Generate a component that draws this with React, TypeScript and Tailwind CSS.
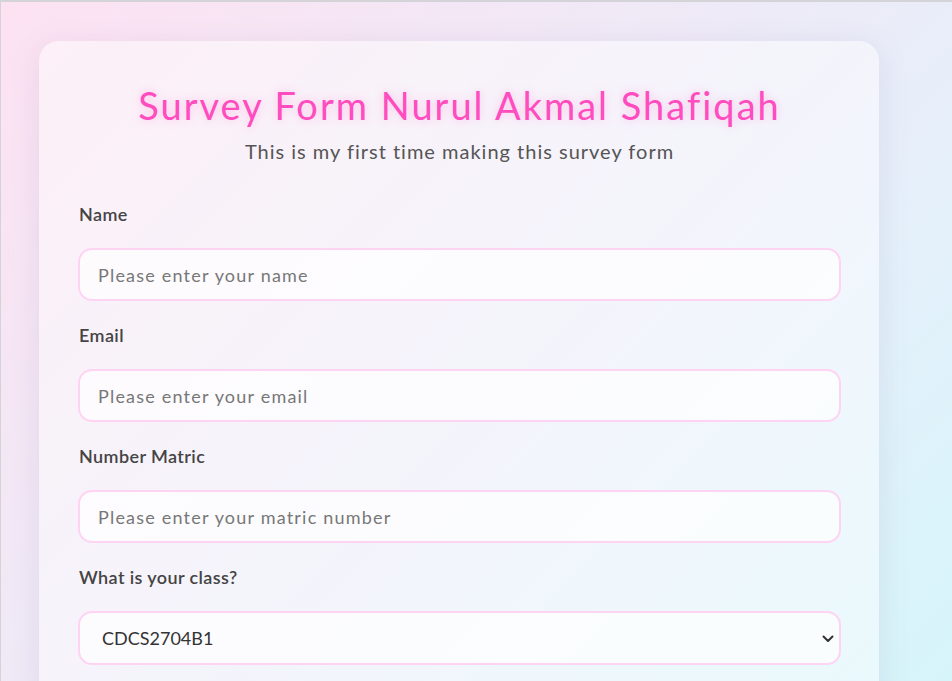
import React from 'react'

const fields = [
    { label: 'Name', placeholder: 'Please enter your name', type: 'text' },
    { label: 'Email', placeholder: 'Please enter your email', type: 'email' },
    { label: 'Number Matric', placeholder: 'Please enter your matric number', type: 'text' },
]

export default function App() {
    return (
        <div className="min-h-screen w-full overflow-hidden border-t-2 border-l border-[#d4d4d8] bg-[linear-gradient(135deg,#fde2f2_0%,#eeeaf7_45%,#e4f0fa_70%,#d5f5fa_100%)] pl-[38px] pt-[39px] font-['Lato',sans-serif]">
            <div className="w-[840px] rounded-[20px] bg-white/45 pl-[39px] pr-[38px] pt-[40px] pb-10 shadow-[0_6px_30px_rgba(120,110,160,0.14)]">
                <h1 className="text-center text-[38px] leading-[48px] tracking-[2px] text-[#ff4cbf] [text-shadow:0_0_10px_rgba(255,105,200,0.35)]">
                    Survey Form Nurul Akmal Shafiqah
                </h1>
                <p className="mt-[9px] text-center text-[20px] leading-[26px] tracking-[1px] text-[#555]">
                    This is my first time making this survey form
                </p>

                <form className="mt-[38px] flex flex-col">
                    {fields.map((f) => (
                        <div key={f.label} className="mb-[22px] flex flex-col">
                            <label className="pl-[1px] text-[18px] leading-[24px] font-semibold tracking-[0.4px] text-[#444]">{f.label}</label>
                            <input
                                type={f.type}
                                placeholder={f.placeholder}
                                className="mt-[22px] h-[53px] w-full rounded-[14px] border-2 border-[#ffd4f3] bg-white/70 px-[18px] text-[18px] tracking-[1.2px] text-[#444] outline-none placeholder:text-[#777]"
                            />
                        </div>
                    ))}
                    <div className="flex flex-col">
                        <label className="pl-[1px] text-[18px] leading-[24px] font-semibold tracking-[0.4px] text-[#444]">What is your class?</label>
                        <div className="relative mt-[22px]">
                            <select className="h-[54px] w-full appearance-none rounded-[14px] border-2 border-[#ffd4f3] bg-white/70 pl-[22px] pr-8 text-[18px] text-[#333] outline-none">
                                <option>CDCS2704B1</option>
                                <option>CDCS2704B2</option>
                            </select>
                            <svg className="pointer-events-none absolute right-[7px] top-[24px]" width="12" height="8" viewBox="0 0 12 8" fill="none">
                                <path d="M1.5 1.5 L6 6 L10.5 1.5" stroke="#333" strokeWidth="2" strokeLinecap="round" strokeLinejoin="round" />
                            </svg>
                        </div>
                    </div>
                </form>
            </div>
        </div>
    )
}
